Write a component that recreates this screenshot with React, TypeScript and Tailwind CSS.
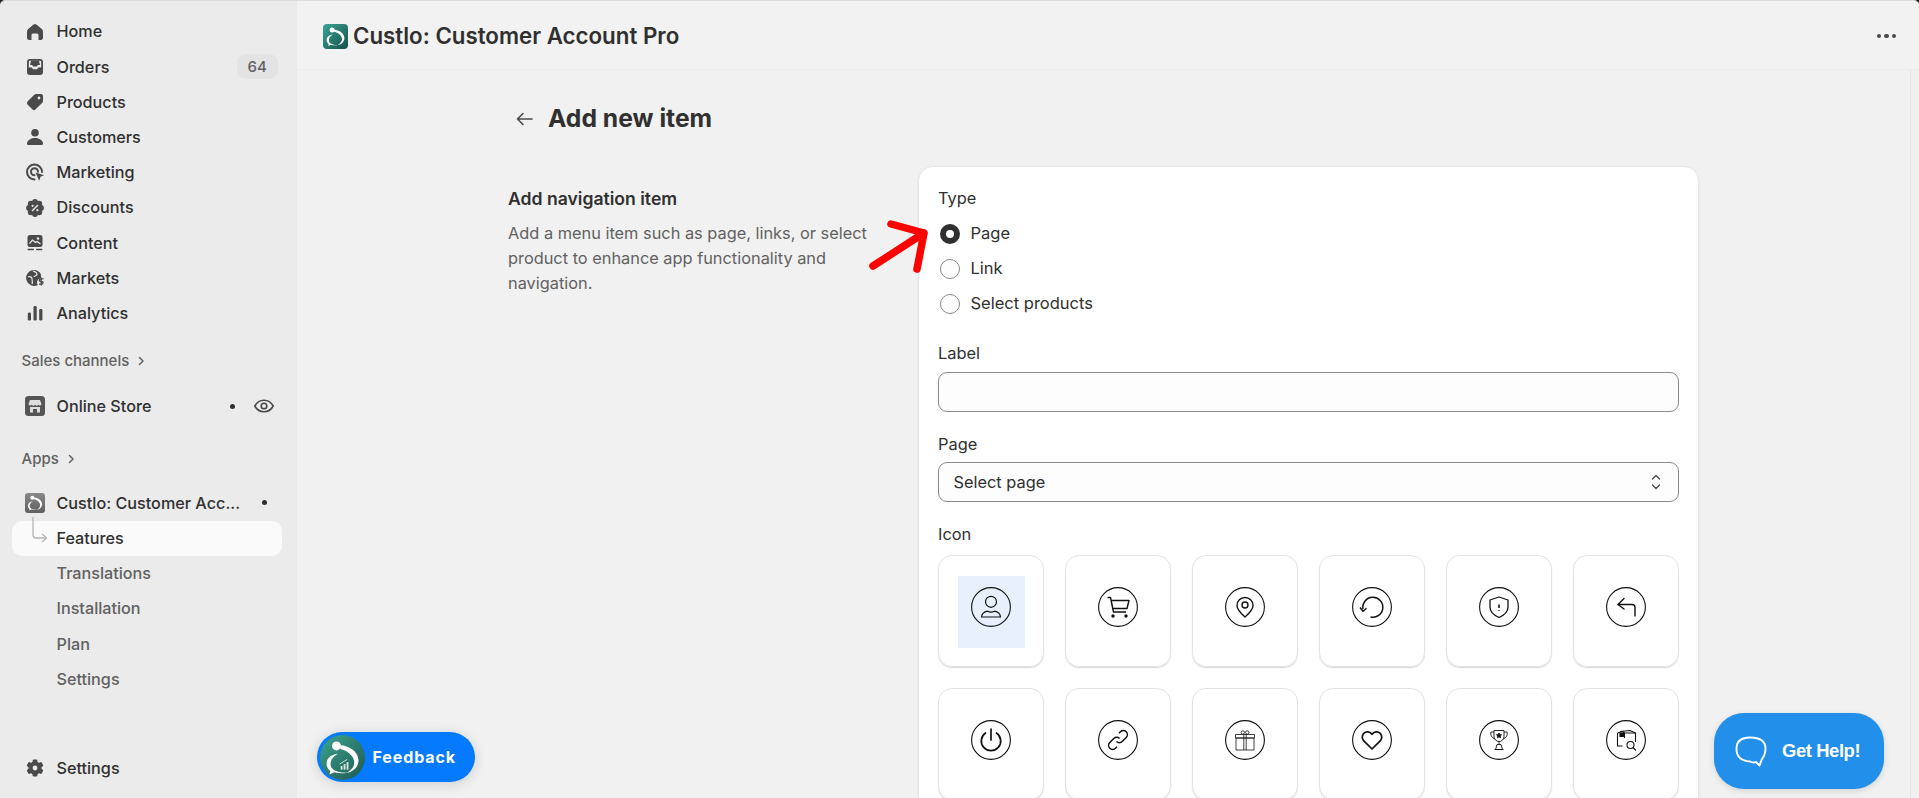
import React from "react";

const D = "#4a4a4a";

function Ic({ children }: { children: React.ReactNode }) {
  return (
    <svg width="20" height="20" viewBox="0 0 20 20" fill={D}>
      {children}
    </svg>
  );
}

const icons: Record<string, React.ReactNode> = {
  Home: (
    <Ic>
      <path d="M8.6 2.5a2.2 2.2 0 0 1 2.8 0l5.4 4.6c.8.7 1.2 1.6 1.2 2.6v5.8a2.5 2.5 0 0 1-2.5 2.5h-2V13a1.5 1.5 0 0 0-1.5-1.5H8A1.5 1.5 0 0 0 6.5 13v5h-2A2.5 2.5 0 0 1 2 15.5V9.7c0-1 .4-1.9 1.2-2.6z" />
    </Ic>
  ),
  Orders: (
    <Ic>
      <path
        fillRule="evenodd"
        d="M5 2h10a3 3 0 0 1 3 3v10a3 3 0 0 1-3 3H5a3 3 0 0 1-3-3V5a3 3 0 0 1 3-3zM3.8 5A1.2 1.2 0 0 1 5 3.8h10A1.2 1.2 0 0 1 16.2 5v5.6h-3l-1.2 1.6H8l-1.2-1.6h-3z"
      />
      <path d="M6 3.8h8l1 4.2h-2.2L12 9.5H8L7.2 8H5z" />
    </Ic>
  ),
  Products: (
    <Ic>
      <path
        fillRule="evenodd"
        d="M11 2h5a2 2 0 0 1 2 2v5a2.500 2.500 0 0 1-.7 1.700l-6.600 6.600a2.400 2.400 0 0 1-3.400 0l-4.600-4.600a2.400 2.400 0 0 1 0-3.400l6.600-6.600A2.500 2.500 0 0 1 11 2zm3 2.600a1.400 1.400 0 1 0 0 2.800 1.400 1.400 0 0 0 0-2.800z"
      />
    </Ic>
  ),
  Customers: (
    <Ic>
      <circle cx="10" cy="5.700" r="3.800" />
      <path d="M2 16.500c0-3 3.500-5.500 8-5.500s8 2.500 8 5.500c0 1-.8 1.500-1.500 1.500h-13C2.800 18 2 17.500 2 16.500z" />
    </Ic>
  ),
  Marketing: (
    <Ic>
      <g fill="none" stroke={D} strokeWidth="2" strokeLinecap="round">
        <path d="M9.500 17.500A7.500 7.500 0 1 1 17 10" />
        <path d="M9.500 13.200A3.500 3.500 0 1 1 13 9.700" />
      </g>
      <path d="M10.500 10.500l8.500 2.700-3.500 1.500-1.300 4z" />
    </Ic>
  ),
  Discounts: (
    <Ic>
      {[0, 45, 90, 135, 180, 225, 270, 315].map((a) => (
        <circle
          key={a}
          cx={10 + 6 * Math.cos((a * Math.PI) / 180)}
          cy={10 + 6 * Math.sin((a * Math.PI) / 180)}
          r="2.900"
        />
      ))}
      <circle cx="10" cy="10" r="6.500" />
      <path d="M7.500 12.500l5-5" stroke="#ebebeb" strokeWidth="1.500" strokeLinecap="round" />
      <circle cx="7.600" cy="7.800" r="1.100" fill="#ebebeb" />
      <circle cx="12.400" cy="12.200" r="1.100" fill="#ebebeb" />
    </Ic>
  ),
  Content: (
    <Ic>
      <rect x="2.500" y="2" width="15" height="12" rx="2.500" />
      <path d="M4.500 10.500l3-3.500 3 2.500 1.500-1 3.500 2.500" fill="none" stroke="#ebebeb" strokeWidth="1.200" />
      <circle cx="13" cy="5.500" r="1.200" fill="#ebebeb" />
      <rect x="2.500" y="15.800" width="6.500" height="1.500" rx=".7" />
      <rect x="11" y="15.800" width="6.500" height="1.500" rx=".7" />
    </Ic>
  ),
  Markets: (
    <Ic>
      <path d="M9 2a8 8 0 1 0 4 15l-1-1.500V14l1-2.500 3-1.500V6.500A8 8 0 0 0 9 2z" />
      <path d="M3 9c2-1 4 0 4 2s1 3 0 5M8 3c2 1 4 1 4 3s-3 2-3 3" fill="none" stroke="#ebebeb" strokeWidth="1.200" />
      <path d="M18.500 10.800h-2.800a1.300 1.300 0 0 0 0 2.700h1a1.300 1.300 0 0 1 0 2.700H14M16.200 9.500v8" fill="none" stroke={D} strokeWidth="1.300" />
    </Ic>
  ),
  Analytics: (
    <Ic>
      <rect x="2.800" y="9.500" width="3.200" height="8" rx="1.200" />
      <rect x="8.500" y="3" width="3.200" height="14.500" rx="1.200" />
      <rect x="14.200" y="6" width="3.200" height="11.500" rx="1.200" />
    </Ic>
  ),
  Settings: (
    <Ic>
      {[0, 60, 120, 180, 240, 300].map((a) => (
        <rect key={a} x="7.600" y="1.500" width="4.800" height="5" rx="1.200" transform={`rotate(${a} 10 10)`} />
      ))}
      <path
        fillRule="evenodd"
        d="M10 3.400a6.600 6.600 0 1 1 0 13.200 6.600 6.600 0 0 1 0-13.200zm0 4.200a2.400 2.400 0 1 0 0 4.800 2.400 2.400 0 0 0 0-4.800z"
      />
    </Ic>
  ),
};

function Swirl({ size, chart = false }: { size: number; chart?: boolean }) {
  return (
    <svg width={size} height={size} viewBox="0 0 24 24" fill="#fff">
      <circle cx="8.800" cy="5.800" r="2.400" />
      <path d="M10.800 5.500c4.500.2 9.200 3 9.700 7.500.4 3.500-2.500 6.800-6.500 7.200 3-1.500 4.500-3.800 4.200-6.200-.3-3-3.700-5.800-7.400-6.600z" />
      <path d="M9.500 10c-3 .3-5.800 1.900-6 5-.1 2 .8 3.300 2 4.200L5 21l2.500-1.200c2.500.7 5 .7 7 .3-3 .1-6.500-.5-8-2.200-1.500-1.800-1.500-5.200 3-7.900z" />
      {chart && (
        <g opacity=".8">
          <rect x="11" y="16.500" width="1" height="2" />
          <rect x="12.600" y="15.500" width="1" height="3" />
          <rect x="14.200" y="14.500" width="1" height="4" />
          <path d="M10.500 15.500l4-2.500" stroke="#fff" strokeWidth=".5" />
        </g>
      )}
    </svg>
  );
}

function Row({
  label,
  icon,
  right,
  color = "text-[#303030]",
  active = false,
}: {
  label: string;
  icon?: React.ReactNode;
  right?: React.ReactNode;
  color?: string;
  active?: boolean;
}) {
  return (
    <div className={`ml-[12px] flex h-[35.2px] w-[270px] shrink-0 items-center rounded-[10px] ${active ? "bg-[#fafafa]" : ""}`}>
      <div className="flex w-[44.500px] shrink-0 items-center pl-[12.500px]">{icon}</div>
      <span className={`text-[16.200px] font-[550] whitespace-nowrap ${color}`}>{label}</span>
      <div className="ml-auto flex items-center">{right}</div>
    </div>
  );
}

function Section({ label }: { label: string }) {
  return (
    <div className="flex h-[35px] shrink-0 items-center gap-[6px] pl-[21.500px] text-[15px] font-[550] text-[#616161]">
      {label}
      <svg width="12" height="12" viewBox="0 0 12 12" fill="none" stroke="#616161" strokeWidth="1.500" strokeLinecap="round" strokeLinejoin="round">
        <path d="M4.500 2.500 8 6l-3.500 3.500" />
      </svg>
    </div>
  );
}

function Dot() {
  return <span className="block h-[5px] w-[5px] rounded-full bg-[#303030]" />;
}

function Radio({ label, checked = false }: { label: string; checked?: boolean }) {
  return (
    <div className="ml-[1.500px] flex h-[35px] items-center gap-[11px]">
      <span
        className={`block h-[20px] w-[20px] shrink-0 rounded-full ${checked ? "border-[6px] border-[#303030] bg-white" : "border border-[#8a8a8a] bg-[#fdfdfd]"}`}
      />
      <span className="text-[16.500px] text-[#303030]">{label}</span>
    </div>
  );
}

const tileIcons: React.ReactNode[] = [
  <g key="user" strokeWidth="1.200">
    <circle cx="20" cy="14.800" r="5.500" />
    <path d="M10.500 30c.3-3 2.800-5.200 6-5.800 2 1 5 1 7 0 3.200.6 5.700 2.800 6 5.800z" />
  </g>,
  <g key="cart" strokeWidth="1.400">
    <path d="M9.500 10.500H12.500L15.500 25H28" />
    <path d="M13 13.500H31L29 21.500H14.500" />
    <circle cx="15" cy="29" r="1" fill="#111" />
    <circle cx="28" cy="29" r="1" fill="#111" />
  </g>,
  <g key="pin" strokeWidth="1.400">
    <path d="M20 10.500a8 8 0 0 0-8 8c0 4.500 8 11.500 8 11.500s8-7 8-11.500a8 8 0 0 0-8-8z" />
    <circle cx="20" cy="18" r="3" />
  </g>,
  <g key="rotate" strokeWidth="1.500">
    <path d="M18.500 30a10 10 0 1 0-7.500-8" />
    <path d="M8 20.500l3 3.800 3.500-3" />
  </g>,
  <g key="shield" strokeWidth="1.300">
    <path d="M20 10l9 3v7c0 5.500-4.500 8.500-9 10.500C15.500 28.500 11 25.500 11 20v-7z" />
    <path d="M20 17.500v3.500M20 23v.8" strokeWidth="1.600" />
  </g>,
  <g key="corner" strokeWidth="1.400" strokeLinecap="round">
    <path d="M29 29V20.500a3 3 0 0 0-3-3H12" />
    <path d="M18 11.500l-6 6 6 4.500" />
  </g>,
  <g key="power" strokeWidth="1.700" strokeLinecap="round">
    <path d="M20 9v11" />
    <path d="M14.500 13a9.700 9.700 0 1 0 11 0" />
  </g>,
  <g key="link" strokeWidth="1.500">
    <path d="M18.500 21.500a4 4 0 0 0 5.700 0l4-4a4 4 0 0 0-5.700-5.700l-1.500 1.500" />
    <path d="M21.500 18.500a4 4 0 0 0-5.700 0l-4 4a4 4 0 0 0 5.700 5.700l1.500-1.500" />
  </g>,
  <g key="gift" strokeWidth=".8">
    <path d="M11 18h18v12H11zM10.500 14.500h19V18h-19zM18.800 14.500V30M21.200 14.500V30" />
    <circle cx="17.800" cy="12.500" r="1.700" />
    <circle cx="22.200" cy="12.500" r="1.700" />
  </g>,
  <g key="heart" strokeWidth="1.700">
    <path d="M20 29l-8.200-8.200a5.300 5.300 0 0 1 0-7.500c2.200-2 5.800-2 8.200 1 2.400-3 6-3 8.200-1a5.300 5.300 0 0 1 0 7.500z" />
  </g>,
  <g key="trophy" strokeWidth=".9">
    <path d="M15 10.500h10v6a5 5 0 0 1-10 0z" />
    <path d="M15 12h-3c-1 3 1 6 4 7M25 12h3c1 3-1 6-4 7" />
    <path d="M20 21.500v3M18 24.500h4l1.500 5h-7zM15.500 29.500h9" />
    <path d="M20 13l.8 1.600 1.700.2-1.300 1.200.4 1.700-1.600-.9-1.600.9.400-1.700-1.300-1.200 1.700-.2z" fill="#111" />
  </g>,
  <g key="pkg" strokeWidth="1.100">
    <path d="M14 11.500l10-1 5.500 2.500V22M11.500 13v13h5" />
    <path d="M11.500 13l5-1.500 2 1.500h11M18.500 13v5" />
    <path d="M14 13l4 0v3.500h-4z" fill="#111" />
    <circle cx="24.500" cy="25" r="3.500" />
    <path d="M27 27.500l3 3" />
  </g>,
];

function Tile({ i, selected = false }: { i: number; selected?: boolean }) {
  return (
    <div className="flex h-[111.500px] items-start justify-center rounded-[14px] border border-[#e3e3e3] pt-[19.500px] shadow-[0_1px_1px_#d8d8d8]">
      <div className={`flex h-[72px] w-[67px] justify-center pt-[11.500px] ${selected ? "bg-[#e8f0fd]" : ""}`}>
        <svg width="40" height="40" viewBox="0 0 40 40" fill="none" stroke="#111" strokeWidth="1" strokeLinejoin="round">
          <circle cx="20" cy="20" r="19.400" strokeWidth="1.100" />
          {tileIcons[i]}
        </svg>
      </div>
    </div>
  );
}

function FieldLabel({ children }: { children: React.ReactNode }) {
  return <div className="flex h-[24px] items-center text-[16.400px] text-[#303030]">{children}</div>;
}

export default function App() {
  return (
    <div className="relative h-[798px] w-[1919px] overflow-hidden bg-[#1a1a1a] font-[family-name:Inter,sans-serif]">
      <div className="flex h-full w-full overflow-hidden rounded-t-[5px] border-t border-[#dddddd]">
        {/* Sidebar */}
        <aside className="flex h-full w-[297px] shrink-0 flex-col bg-[#ebebeb] pt-[13px] pb-[12px]">
          {["Home", "Orders", "Products", "Customers", "Marketing", "Discounts", "Content", "Markets", "Analytics"].map((n) => (
            <Row
              key={n}
              label={n}
              icon={icons[n]}
              right={
                n === "Orders" ? (
                  <span className="mr-[4.500px] flex h-[25px] w-[40.500px] items-center justify-center rounded-[9px] bg-[#e3e3e3] text-[15px] font-[550] text-[#616161]">
                    64
                  </span>
                ) : undefined
              }
            />
          ))}
          <div className="h-[13px] shrink-0" />
          <Section label="Sales channels" />
          <div className="h-[10px] shrink-0" />
          <Row
            label="Online Store"
            icon={
              <svg width="20" height="20" viewBox="0 0 20 20">
                <rect width="20" height="20" rx="3.500" fill="#555" />
                <path d="M5 4h10l1.500 4a1.800 1.800 0 0 1-3.200.8 2.300 2.300 0 0 1-3.300 0 2.300 2.300 0 0 1-3.300 0A1.800 1.800 0 0 1 3.500 8z" fill="#ddd" />
                <path d="M5 11h10v5.500h-3v-3.500H8v3.500H5z" fill="#ddd" />
              </svg>
            }
            right={
              <div className="flex items-center">
                <Dot />
                <svg className="mx-[8px] ml-[19px]" width="20" height="20" viewBox="0 0 20 20" fill="none" stroke={D} strokeWidth="1.600">
                  <path d="M.8 10C3 6 6.200 4.200 10 4.200S17 6 19.200 10C17 14 13.800 15.800 10 15.800S3 14 .8 10z" />
                  <circle cx="10" cy="10" r="2.800" />
                </svg>
              </div>
            }
          />
          <div className="h-[17.500px] shrink-0" />
          <Section label="Apps" />
          <div className="h-[9px] shrink-0" />
          <div className="relative">
            <Row
              label="Custlo: Customer Acc..."
              icon={
                <div className="h-[20px] w-[20px] overflow-hidden rounded-[3px] bg-gradient-to-b from-[#8a8a8a] to-[#5f5f5f]">
                  <Swirl size={20} />
                </div>
              }
              right={
                <div className="mr-[15px]">
                  <Dot />
                </div>
              }
            />
            <Row label="Features" active />
            <svg className="absolute top-[32px] left-[28px]" width="22" height="26" viewBox="0 0 22 26" fill="none" stroke="#b5b5b5" strokeWidth="1.300">
              <path d="M5 0v18a3 3 0 0 0 3 3h10" />
              <path d="M14 17l4.500 4-4.500 4" />
            </svg>
          </div>
          {["Translations", "Installation", "Plan", "Settings"].map((n) => (
            <Row key={n} label={n} color="text-[#616161]" />
          ))}
          <div className="mt-auto">
            <Row label="Settings" icon={icons.Settings} />
          </div>
        </aside>

        {/* Main */}
        <main className="flex min-w-0 flex-1 flex-col bg-[#f1f1f1]">
          <header className="flex h-[69px] shrink-0 items-center border-b border-[#ebebeb] bg-[#f2f2f2] pt-[2px] pr-[23px] pl-[26px]">
            <div className="mr-[5px] h-[25px] w-[25px] overflow-hidden rounded-[4px] bg-gradient-to-br from-[#3aa595] to-[#17524a]">
              <Swirl size={25} />
            </div>
            <span className="text-[22.300px] font-semibold text-[#303030]">Custlo: Customer Account Pro</span>
            <div className="ml-auto flex gap-[3px]">
              <span className="h-[4.500px] w-[4.500px] rounded-full bg-[#4a4a4a]" />
              <span className="h-[4.500px] w-[4.500px] rounded-full bg-[#4a4a4a]" />
              <span className="h-[4.500px] w-[4.500px] rounded-full bg-[#4a4a4a]" />
            </div>
          </header>
          <div className="flex min-h-0 flex-1">
            <div className="min-w-0 flex-1 overflow-hidden pl-[211px]">
              <div className="flex h-[96px] items-center pt-[2px] pl-[8px]">
                <svg className="mr-[15px]" width="17" height="14" viewBox="0 0 17 14" fill="none" stroke="#4a4a4a" strokeWidth="1.600" strokeLinecap="round" strokeLinejoin="round">
                  <path d="M16 7H1.500M7 1.500 1.500 7 7 12.500" />
                </svg>
                <h1 className="text-[24.700px] font-bold text-[#303030]">Add new item</h1>
              </div>
              <div className="flex items-start">
                <div className="w-[410px] shrink-0 pt-[20px]">
                  <h2 className="mb-[9px] text-[17.600px] leading-[25px] font-semibold text-[#303030]">Add navigation item</h2>
                  <p className="w-[375px] pt-[1px] text-[16.350px] leading-[25px] text-[#616161]">
                    Add a menu item such as page, links, or select product to enhance app functionality and navigation.
                  </p>
                </div>
                <section className="w-[781px] shrink-0 rounded-t-[15px] border border-[#e6e6e6] bg-white px-[19px] pt-[14px] pb-[20px] shadow-[0_1px_2px_#e0e0e0]">
                  <div className="flex h-[35px] items-center text-[16.400px] text-[#303030]">Type</div>
                  <Radio label="Page" checked />
                  <Radio label="Link" />
                  <Radio label="Select products" />
                  <div className="mt-[20.500px]">
                    <FieldLabel>Label</FieldLabel>
                  </div>
                  <div className="mt-[6px] h-[40px] rounded-[9px] border border-[#8a8a8a] bg-[#fdfdfd]" />
                  <div className="mt-[20.500px]">
                    <FieldLabel>Page</FieldLabel>
                  </div>
                  <div className="mt-[6px] flex h-[40px] items-center justify-between rounded-[9px] border border-[#8a8a8a] bg-[#fdfdfd] pr-[17px] pl-[14.500px] text-[16.350px] text-[#303030]">
                    Select page
                    <svg width="10" height="18" viewBox="0 0 10 18" fill="none" stroke="#4a4a4a" strokeWidth="1.300" strokeLinecap="round" strokeLinejoin="round">
                      <path d="M1.500 6 5 2.500 8.500 6M1.500 12 5 15.500 8.500 12" />
                    </svg>
                  </div>
                  <div className="mt-[20px]">
                    <FieldLabel>Icon</FieldLabel>
                  </div>
                  <div className="mt-[9px] grid grid-cols-6 gap-x-[21px] gap-y-[21.500px]">
                    {tileIcons.map((_, i) => (
                      <Tile key={i} i={i} selected={i === 0} />
                    ))}
                  </div>
                </section>
              </div>
            </div>
            <div className="w-[9px] shrink-0 border-l border-[#e4e4e4] bg-[#f0f0f0]" />
          </div>
        </main>
      </div>

      {/* Annotation arrow */}
      <svg className="absolute top-[220px] left-[868px]" width="60" height="54" viewBox="0 0 60 54" fill="none" stroke="#ff0000" strokeWidth="7.500" strokeLinecap="round" strokeLinejoin="round">
        <path d="M23 4 56 13 49 49M56 13 5 46" />
      </svg>

      {/* Feedback */}
      <div className="absolute top-[732px] left-[317px] flex h-[50px] w-[158px] items-center rounded-full bg-[#057aff] pl-[2.500px] shadow-[0_2px_14px_rgba(0,0,0,0.14)]">
        <div className="h-[45px] w-[45px] shrink-0 overflow-hidden rounded-full bg-gradient-to-br from-[#3fa591] to-[#1d5a50]">
          <Swirl size={45} chart />
        </div>
        <span className="ml-[8px] text-[16px] font-bold tracking-[0.9px] text-white">Feedback</span>
      </div>

      {/* Get Help */}
      <div className="absolute top-[713px] left-[1714px] flex h-[76px] w-[170px] items-center rounded-[30px] bg-[#2290ea] pl-[21px] shadow-[0_2px_6px_rgba(0,0,0,0.12)]">
        <svg width="32" height="31" viewBox="0 0 32 31" fill="none" stroke="#fff" strokeWidth="1.900" strokeLinejoin="round">
          <path d="M15 1.500c8 0 15.500 2 15.500 11 0 5.500-2 8.500-3.500 10.500-.8 1.500-1.500 4-2.500 6.500L21 26c-1.500.8-4 .5-6-.5C8 25 1.500 22 1.500 13 1.500 5 7 1.500 15 1.500z" />
        </svg>
        <span className="ml-[15px] font-[family-name:'Liberation_Sans',Arial,sans-serif] text-[18.400px] font-bold tracking-[-0.4px] text-white">Get Help!</span>
      </div>
    </div>
  );
}
